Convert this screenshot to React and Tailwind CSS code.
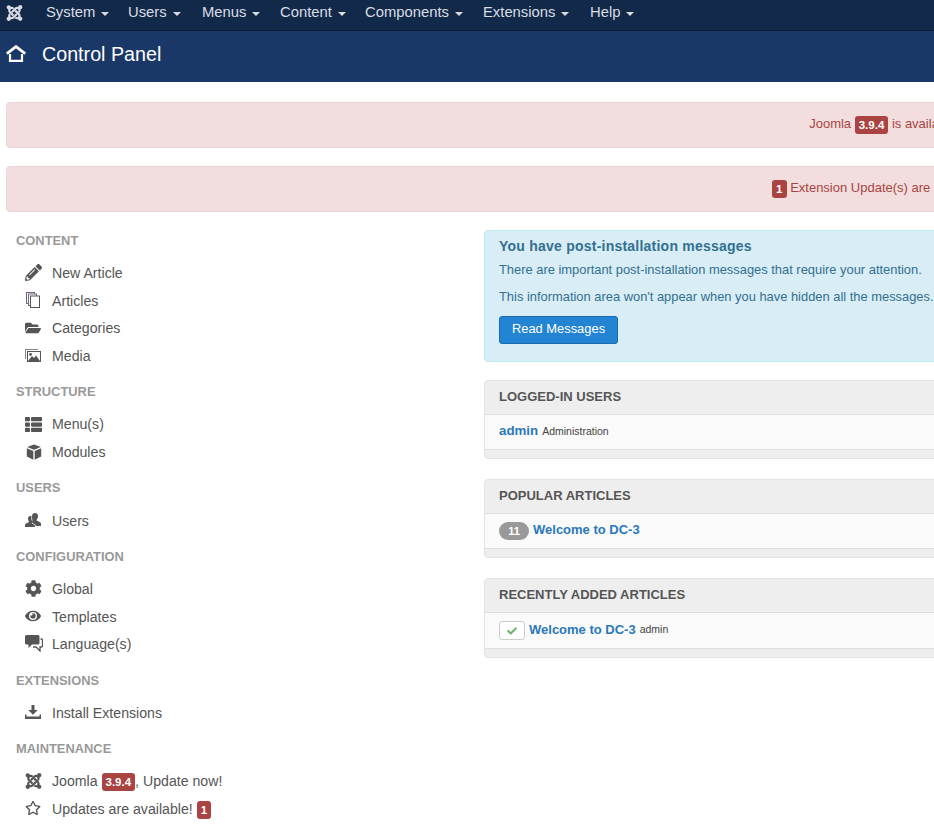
import {
  FaJoomla, FaPencilAlt, FaFolderOpen, FaThList, FaCog, FaEye, FaRegStar, FaCheck,
} from 'react-icons/fa';

const font = { fontFamily: '"Liberation Sans", Arial, sans-serif' };

const HomeIcon = ({ className }) => (
  <svg viewBox="0 0 20 17" className={className} fill="none" stroke="currentColor">
    <path d="M0.8 8.6 L10 1.6 L19.200 8.600" strokeWidth="2.8" />
    <path d="M4 9 V15.800 H16 V9" strokeWidth="2.200" />
  </svg>
);

const StackIcon = ({ className }) => (
  <svg viewBox="0 0 14 16" className={className} fill="#fff" strokeWidth="1">
    <rect x="0.5" y="0.5" width="8" height="11" stroke="#7a5a86" />
    <rect x="2.5" y="2" width="8" height="11.500" stroke="#6d6d7a" />
    <rect x="4.500" y="4" width="9" height="11.500" stroke="#555" />
  </svg>
);

const ImagesIcon = ({ className }) => (
  <svg viewBox="0 0 16 13" className={className}>
    <path d="M0 0H13V1H1V10H0Z" fill="#7b8a84" />
    <rect x="2.500" y="2.500" width="13" height="10" fill="#fff" stroke="#555" />
    <path d="M3 12 L7 7 L9 9 L11 6.500 L15 12Z" fill="#555" />
    <circle cx="5.500" cy="5.500" r="1.400" fill="#555" />
  </svg>
);

const CubeIcon = ({ className }) => (
  <svg viewBox="0 0 16 16" className={className} fill="currentColor">
    <path d="M8 0.500 L14.800 3 L8 5.700 L1.200 3Z" />
    <path d="M0.800 4.300 L7.300 6.900 V15.700 L0.800 12.600Z" />
    <path d="M15.200 4.300 L8.700 6.900 V15.700 L15.200 12.600Z" />
  </svg>
);

const UsersIcon = ({ className }) => (
  <svg viewBox="0 0 16 14" className={className} fill="currentColor">
    <path d="M7 3.200C7 1.200 8.300 0 10 0s3 1.200 3 3.200c0 1.500-.6 2.800-1.300 3.500-.3.600 0 1 .9 1.400 1.100.5 3.400 1 3.400 2.700V13h-5.200c-.3-1.500-1.700-2.200-3-2.800-1-.5-.9-1.200-.5-1.900.2-.5.200-.8 0-1.400C7.200 6 7 4.500 7 3.200Z" />
    <path d="M3 5.500C3 3.900 4 3 5.300 3s1.700.6 1 2c0 1.300.4 2.400.8 3.100.3.700 0 1.500-.3 1.900-.3.500 1 .9 2 1.400.8.400 1.200 1 1.300 2.600H0v-2.100c0-1.300 2.300-1.800 3.300-2.300.6-.3.700-.8.400-1.300C3.300 7.500 3 6.600 3 5.500Z" />
  </svg>
);

const BubblesIcon = ({ className }) => (
  <svg viewBox="0 0 18 17" className={className} fill="currentColor">
    <path d="M1.500 0H13a1.500 1.500 0 0 1 1.500 1.500V8A1.500 1.500 0 0 1 13 9.500H7L3.500 13V9.500H1.500A1.500 1.500 0 0 1 0 8V1.500A1.500 1.500 0 0 1 1.500 0Z" />
    <path d="M15.500 4H16.500A1 1 0 0 1 17.500 5V11A1 1 0 0 1 16.500 12H15V16L11 12H8" fill="none" stroke="currentColor" strokeWidth="1.300" />
  </svg>
);

const DownloadIcon = ({ className }) => (
  <svg viewBox="0 0 16 14" className={className} fill="currentColor">
    <path d="M6.500 0H9.500V5H12.800L8 9.800 3.200 5H6.500Z" />
    <path d="M0 9.500H1.500V11.500H14.500V9.500H16V14H0Z" />
  </svg>
);

const Caret = () => (
  <span className="ml-[6px] inline-block h-0 w-0 border-x-4 border-t-4 border-x-transparent border-t-[#d9dde3] align-middle" />
);

const navItems = [
  { label: 'System', width: 'w-[82px]' },
  { label: 'Users', width: 'w-[74px]' },
  { label: 'Menus', width: 'w-[78px]' },
  { label: 'Content', width: 'w-[85px]' },
  { label: 'Components', width: 'w-[118px]' },
  { label: 'Extensions', width: 'w-[107px]' },
  { label: 'Help', width: 'w-[60px]' },
];

const sections = [
  {
    title: 'CONTENT',
    links: [
      { label: 'New Article', icon: <FaPencilAlt className="h-[17px] w-[17px]" /> },
      { label: 'Articles', icon: <StackIcon className="ml-px h-[16px] w-[14px]" /> },
      { label: 'Categories', icon: <FaFolderOpen className="h-[16px] w-[16px]" /> },
      { label: 'Media', icon: <ImagesIcon className="h-[13px] w-[16px]" /> },
    ],
  },
  {
    title: 'STRUCTURE',
    links: [
      { label: 'Menu(s)', icon: <FaThList className="h-[17px] w-[17px]" /> },
      { label: 'Modules', icon: <CubeIcon className="ml-px h-[16px] w-[16px]" /> },
    ],
  },
  {
    title: 'USERS',
    links: [{ label: 'Users', icon: <UsersIcon className="h-[14px] w-[16px]" /> }],
  },
  {
    title: 'CONFIGURATION',
    links: [
      { label: 'Global', icon: <FaCog className="h-[17px] w-[17px]" /> },
      { label: 'Templates', icon: <FaEye className="h-[16px] w-[16px]" /> },
      { label: 'Language(s)', icon: <BubblesIcon className="h-[17px] w-[18px]" /> },
    ],
  },
  {
    title: 'EXTENSIONS',
    links: [{ label: 'Install Extensions', icon: <DownloadIcon className="h-[14px] w-[16px]" /> }],
  },
  {
    title: 'MAINTENANCE',
    links: [
      {
        label: (
          <>
            Joomla <Badge>3.9.4</Badge>, Update now!
          </>
        ),
        icon: <FaJoomla className="h-[18px] w-[17px]" />,
      },
      {
        label: (
          <>
            Updates are available! <Badge>1</Badge>
          </>
        ),
        icon: <FaRegStar className="h-[16px] w-[16px]" />,
      },
    ],
  },
];

function Badge({ children }) {
  return (
    <span className="inline-block rounded-[3px] bg-[#a94442] px-[4px] py-[2px] align-middle text-[11.5px] leading-[14px] font-bold text-white">
      {children}
    </span>
  );
}

function Panel({ title, children }) {
  return (
    <div className="mb-[20px] rounded-[4px] border border-[#e3e3e3] bg-[#eeeeee]">
      <div className="flex h-[33px] items-center px-[14px] pb-[2px] text-[13px] font-bold text-[#555555]">{title}</div>
      <div className="flex min-h-[36px] items-center border-y border-[#dddddd] bg-[#fafafa] px-[14px] py-[6px]">{children}</div>
      <div className="h-[8px]" />
    </div>
  );
}

export default function App() {
  return (
    <div className="h-[828px] w-[934px] overflow-hidden bg-white text-[14.15px] text-[#555555]" style={font}>
      <div className="w-[1820px]">
        <nav className="flex h-[31px] items-center border-b border-[#0c1b32] bg-[#13294a] pb-[5px] text-[14.8px] text-[#d9dde3]">
          <div className="flex w-[46px] justify-center pr-[18px]">
            <FaJoomla className="h-[18px] w-[17px] text-[#d9dde3]" />
          </div>
          {navItems.map((item) => (
            <span key={item.label} className={`${item.width} whitespace-nowrap`}>
              {item.label}
              <Caret />
            </span>
          ))}
        </nav>

        <header className="flex h-[51px] items-center bg-[#1a3867] pb-[4px] text-white">
          <HomeIcon className="ml-[6px] -translate-y-px h-[17px] w-[20px]" />
          <h1 className="ml-[16px] text-[19.7px] font-normal">Control Panel</h1>
        </header>

        <main className="px-[6px] pt-[20px]">
          <div className="mb-[18px] flex h-[46px] items-center justify-center rounded-[4px] border border-[#eed3d7] bg-[#f2dede] pb-[2px] pl-[22px] text-[13px] text-[#a94442]">
            <span>
              Joomla <Badge>3.9.4</Badge> is available: Update now
            </span>
          </div>
          <div className="flex h-[46px] items-center justify-center rounded-[4px] border border-[#eed3d7] bg-[#f2dede] pb-[2px] text-[13px] text-[#a94442]">
            <span>
              <Badge>1</Badge> Extension Update(s) are available: View now
            </span>
          </div>

          <div className="mt-[18px] flex">
            <aside className="w-[478px] shrink-0 pl-[10px]">
              {sections.map((section) => (
                <section key={section.title} className="mb-[10.9px]">
                  <h2 className="h-[21px] text-[12.9px] leading-[21px] font-bold text-[#999999]">{section.title}</h2>
                  <ul className="mt-[9px]">
                    {section.links.map((link, i) => (
                      <li key={i} className="flex h-[27.6px] items-center">
                        <span className="-mt-[2px] flex w-[36px] justify-start pl-[9px] text-[#555555]">{link.icon}</span>
                        <span className="whitespace-nowrap">{link.label}</span>
                      </li>
                    ))}
                  </ul>
                </section>
              ))}
            </aside>

            <div className="min-w-0 flex-1">
              <div className="mb-[18px] h-[132px] rounded-[4px] border border-[#bce8f1] bg-[#d9edf7] px-[14px] pt-[7px] text-[#31708f]">
                <h4 className="text-[14px] leading-[16px] font-bold tracking-[0.23px]">You have post-installation messages</h4>
                <p className="mt-[7px] text-[12.9px] leading-[18px] whitespace-nowrap">
                  There are important post-installation messages that require your attention.
                </p>
                <p className="mt-[9px] text-[12.9px] leading-[18px] whitespace-nowrap">
                  This information area won't appear when you have hidden all the messages.
                </p>
                <button className="mt-[10px] h-[28px] w-[119px] rounded-[3px] border border-[#1a6cb0] bg-[#2384d3] pb-[3px] text-[12.9px] text-white">
                  Read Messages
                </button>
              </div>

              <Panel title="LOGGED-IN USERS">
                <a className="-translate-y-px text-[13.3px] font-bold text-[#2b78b8]">admin</a>
                <span className="ml-[4px] text-[10.5px] text-[#444444]">Administration</span>
              </Panel>

              <Panel title="POPULAR ARTICLES">
                <span className="inline-block h-[18px] w-[30px] rounded-full bg-[#999999] text-center text-[11px] leading-[18px] font-bold text-white">
                  11
                </span>
                <a className="ml-[4px] -translate-y-px text-[13px] font-bold text-[#2b78b8]">Welcome to DC-3</a>
              </Panel>

              <Panel title="RECENTLY ADDED ARTICLES">
                <span className="my-[2px] flex h-[19px] w-[26px] items-center justify-center rounded-[3px] border border-[#cccccc] bg-white">
                  <FaCheck className="h-[10px] w-[10px] text-[#6cae6c]" />
                </span>
                <a className="ml-[4px] -translate-y-px text-[13px] font-bold text-[#2b78b8]">Welcome to DC-3</a>
                <span className="ml-[4px] -translate-y-px text-[10.5px] text-[#444444]">admin</span>
              </Panel>
            </div>
          </div>
        </main>
      </div>
    </div>
  );
}
